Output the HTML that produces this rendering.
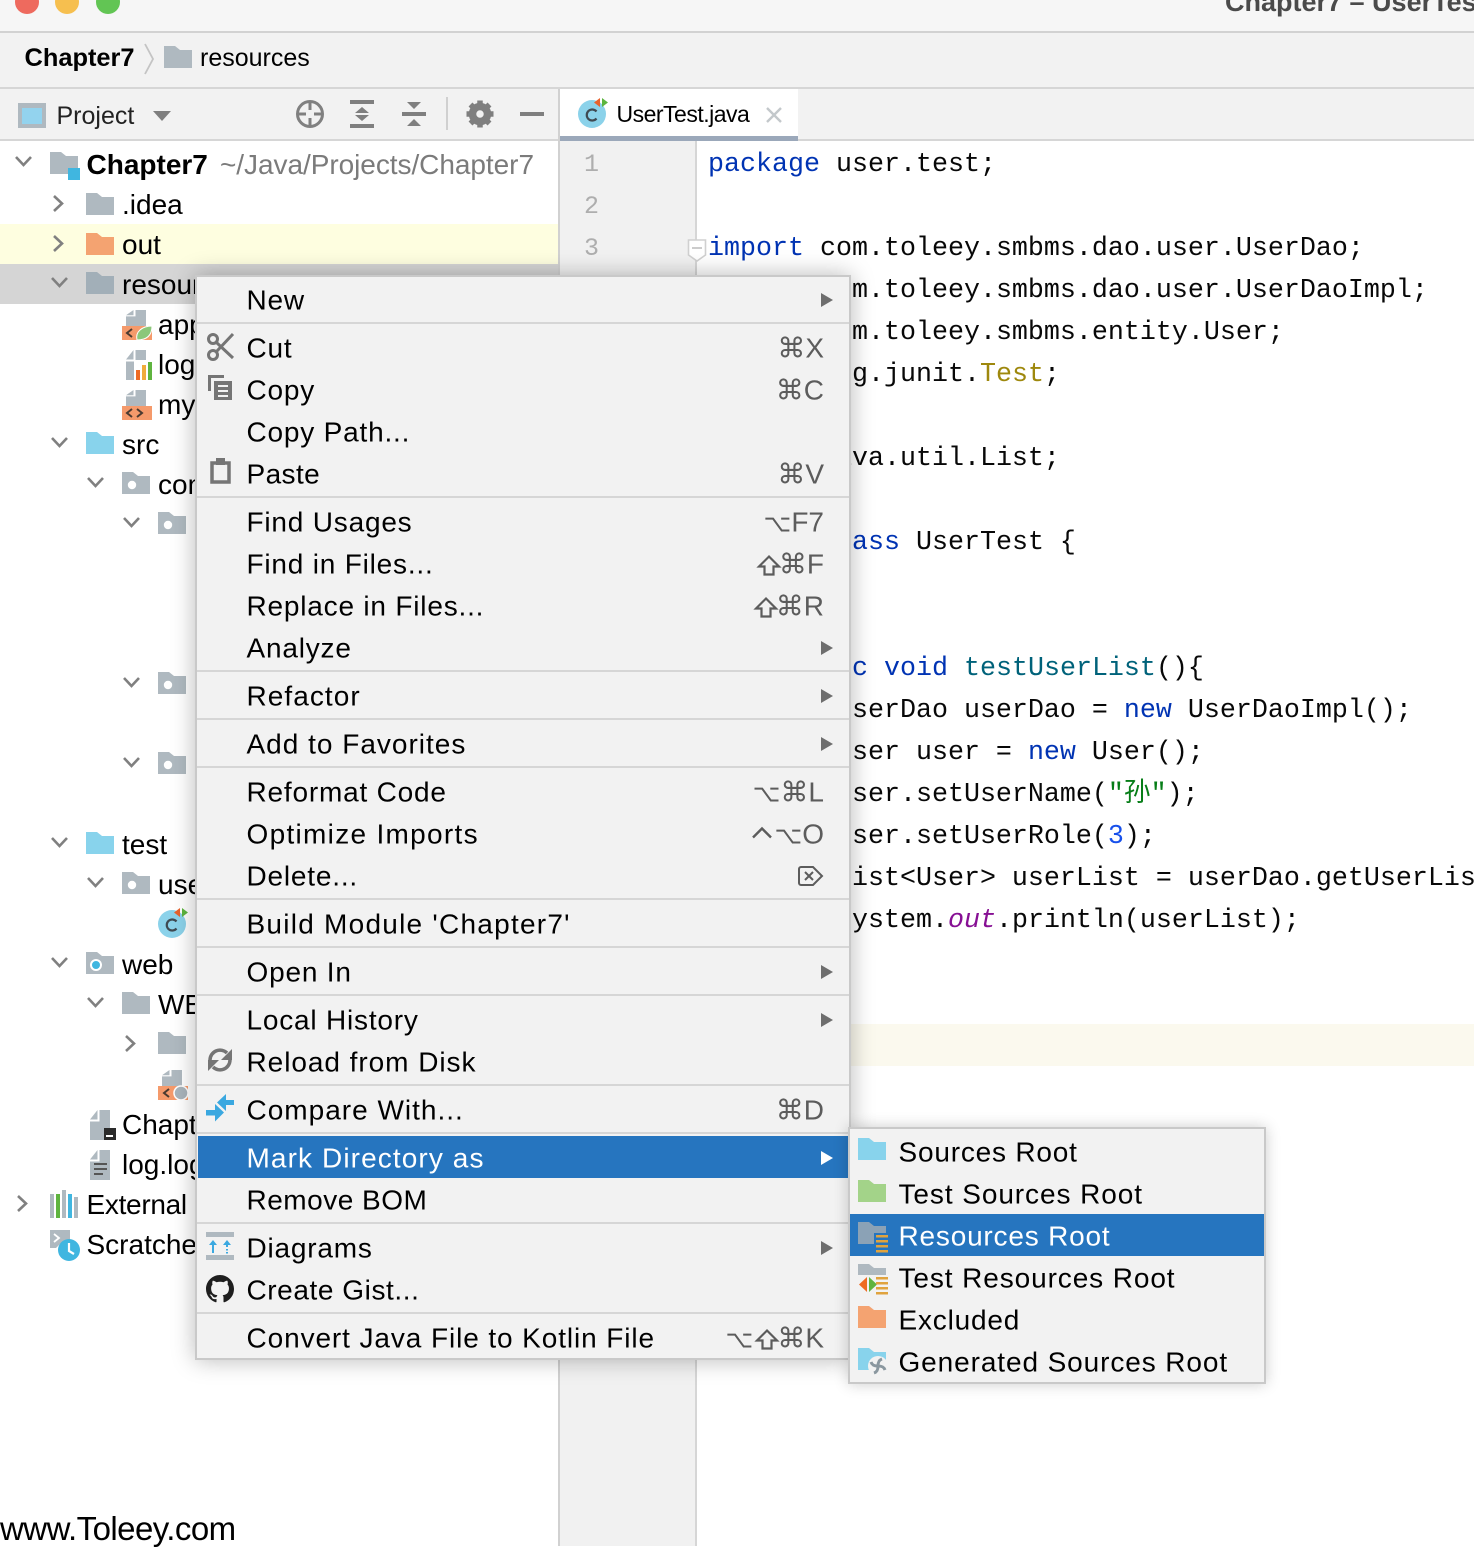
<!DOCTYPE html>
<html><head><meta charset="utf-8"><style>
html,body{margin:0;padding:0}
body{width:1474px;height:1546px;overflow:hidden;position:relative;background:#fff;font-family:"Liberation Sans","DejaVu Sans","Noto Sans CJK SC",sans-serif;color:#000}
.a{position:absolute}
.t{position:absolute;white-space:nowrap;line-height:40px;font-size:28px}
.c{position:absolute;left:708px;white-space:pre;font-family:"Liberation Mono","Noto Sans CJK SC",monospace;font-size:26.67px;line-height:42px;color:#080808}
.k{color:#0033b3}.f{color:#00627a}.s{color:#067d17}.n{color:#1750eb}.an{color:#9e880d}.o{color:#871094;font-style:italic}
.ln{position:absolute;left:584px;font-family:"Liberation Mono",monospace;font-size:25px;line-height:42px;color:#aeaeae}
.sep{position:absolute;left:0;width:652px;height:2px;background:#d6d6d6}
.m{position:absolute;white-space:nowrap;line-height:40px;font-size:28px;letter-spacing:.8px;left:49.5px;transform:translateY(.5px)}
.sc{position:absolute;white-space:nowrap;line-height:40px;font-size:28px;right:25px;color:#5c5c5c;transform:translateY(.5px)}
.sc i{font-style:normal;font-size:24px}
svg{position:absolute;left:0;top:0;overflow:visible}
svg.si{position:static;vertical-align:-3px;margin-right:-2px}
</style></head><body>
<div class="a" style="left:0;top:0;width:1474px;height:31px;background:#f6f6f6"></div>
<div class="a" style="left:0;top:31px;width:1474px;height:2px;background:#d2d2d2"></div>
<div class="a" style="left:0;top:33px;width:1474px;height:54px;background:#f2f2f2"></div>
<div class="a" style="left:0;top:87px;width:1474px;height:2px;background:#d6d6d6"></div>
<div class="a" style="left:0;top:89px;width:558px;height:50px;background:#f2f2f2"></div>
<div class="a" style="left:560px;top:89px;width:914px;height:50px;background:#f2f2f2"></div>
<div class="a" style="left:0;top:139px;width:1474px;height:2px;background:#d6d6d6"></div>
<div class="a" style="left:558px;top:89px;width:2px;height:1457px;background:#d1d1d1"></div>
<div class="a" style="left:560px;top:89px;width:238px;height:48px;background:#fff"></div>
<div class="a" style="left:560px;top:136px;width:238px;height:5px;background:#9ba8ba"></div>
<div class="a" style="left:560px;top:141px;width:135px;height:1405px;background:#f1f1f1"></div>
<div class="a" style="left:695px;top:141px;width:2px;height:1405px;background:#d6d6d6"></div>
<div class="a" style="left:697px;top:1024px;width:777px;height:42px;background:#fbf9ee"></div>
<div class="a" style="left:0;top:224px;width:558px;height:40px;background:#fefee0"></div>
<div class="a" style="left:0;top:264px;width:558px;height:40px;background:#d5d5d5"></div>

<div class="t" style="left:1225px;top:-18px;font-size:27px;font-weight:bold;color:#4a4a4a">Chapter7 – UserTest</div>
<div class="t" style="left:24.500px;top:38px;font-size:25.400px;font-weight:bold">Chapter7</div>
<div class="t" style="left:200px;top:38px;font-size:25px">resources</div>
<div class="t" style="left:56.500px;top:96px;font-size:25px;color:#222">Project</div>
<div class="t" style="left:616.500px;top:94px;font-size:23px;letter-spacing:-.5px">UserTest.java</div>

<div class="t" style="left:86.500px;top:145px;font-weight:bold">Chapter7</div>
<div class="t" style="left:220px;top:145px;color:#7b7b7b;letter-spacing:-.05px">~/Java/Projects/Chapter7</div>
<div class="t" style="left:122px;top:185px">.idea</div>
<div class="t" style="left:122px;top:225px">out</div>
<div class="t" style="left:122px;top:265px">resources</div>
<div class="t" style="left:158px;top:305px">application.xml</div>
<div class="t" style="left:158px;top:345px">log4j.properties</div>
<div class="t" style="left:158px;top:385px">mybatis.xml</div>
<div class="t" style="left:122px;top:425px">src</div>
<div class="t" style="left:158px;top:465px">com.toleey</div>
<div class="t" style="left:122px;top:825px">test</div>
<div class="t" style="left:158px;top:865px">user.test</div>
<div class="t" style="left:122px;top:945px">web</div>
<div class="t" style="left:158px;top:985px">WEB-INF</div>
<div class="t" style="left:122px;top:1105px">Chapter7.iml</div>
<div class="t" style="left:122px;top:1145px">log.log</div>
<div class="t" style="left:86.500px;top:1185px;letter-spacing:-.3px">External Libraries</div>
<div class="t" style="left:86.500px;top:1225px">Scratches and Consoles</div>
<div class="t" style="left:0;top:1509px;font-size:33px;letter-spacing:-.55px">www.Toleey.com</div>

<div class="ln" style="top:144px">1</div>
<div class="ln" style="top:186px">2</div>
<div class="ln" style="top:228px">3</div>

<div class="c" style="top:144px"><span class="k">package</span> user.test;</div>
<div class="c" style="top:228px"><span class="k">import</span> com.toleey.smbms.dao.user.UserDao;</div>
<div class="c" style="top:270px"><span class="k">import</span> com.toleey.smbms.dao.user.UserDaoImpl;</div>
<div class="c" style="top:312px"><span class="k">import</span> com.toleey.smbms.entity.User;</div>
<div class="c" style="top:354px"><span class="k">import</span> org.junit.<span class="an">Test</span>;</div>
<div class="c" style="top:438px"><span class="k">import</span> java.util.List;</div>
<div class="c" style="top:522px"><span class="k">public class</span> UserTest {</div>
<div class="c" style="top:648px">    <span class="k">public void</span> <span class="f">testUserList</span>(){</div>
<div class="c" style="top:690px">        UserDao userDao = <span class="k">new</span> UserDaoImpl();</div>
<div class="c" style="top:732px">        User user = <span class="k">new</span> User();</div>
<div class="c" style="top:774px">        user.setUserName(<span class="s">"孙"</span>);</div>
<div class="c" style="top:816px">        user.setUserRole(<span class="n">3</span>);</div>
<div class="c" style="top:858px">        List&lt;User&gt; userList = userDao.getUserList();</div>
<div class="c" style="top:900px">        System.<span class="o">out</span>.println(userList);</div>

<svg width="1474" height="1546" viewBox="0 0 1474 1546">
<defs>
<path id="fd" d="M0 0h11l5 4h12v18H0z"/>
<path id="pg" d="M9.500 0H20V30H0V11.500H9.500ZM0 9.500L7.500 0V9.500Z"/>
<path id="dn" d="M0 0l7.500 8L15 0" fill="none" stroke="#808080" stroke-width="2.600"/>
<path id="rt" d="M0 0l8 7.500L0 15" fill="none" stroke="#808080" stroke-width="2.600"/>
<g id="pk"><use href="#fd" fill="#afb9c0"/><circle cx="10" cy="13" r="4.200" fill="#fff"/></g>
<g id="cl"><circle cx="14" cy="16" r="14" fill="#8bd2ea"/><path d="M18.500 13.500a5.500 5.500 0 1 0 0 7" fill="none" stroke="#3f4a52" stroke-width="2.200"/><path d="M22 0v9l-6-4.500z" fill="#e8622c"/><path d="M24 0v9l6-4.500z" fill="#5cb53f"/></g>
</defs>
<circle cx="27" cy="2" r="12" fill="#ee6a5e"/><circle cx="67" cy="2" r="12" fill="#f6bf4f"/><circle cx="108" cy="2" r="12" fill="#62c554"/>
<path d="M145 44l8 15-8 15" fill="none" stroke="#c4c4c4" stroke-width="1.800"/>
<use href="#fd" x="164" y="46" fill="#afb9c0"/>
<rect x="18" y="103" width="28" height="25" fill="#afb9c0"/><rect x="22" y="108" width="20" height="16" fill="#93d3ee"/>
<path d="M153 111h18l-9 10z" fill="#7f7f7f"/>
<g fill="none" stroke="#808080" stroke-width="3"><circle cx="310" cy="114" r="12.500"/><path d="M310 101v9M310 118v9M297 114h9M314 114h9"/></g>
<path d="M350 100h24v4h-24zM350 124h24v4h-24zM362 107l7 6h-14zM362 121l7-6h-14z" fill="#7f7f7f"/>
<path d="M402 112h24v4h-24zM407 102h14l-7 7zM414 119l7 7h-14z" fill="#7f7f7f"/>
<rect x="446" y="97" width="2" height="33" fill="#d0d0d0"/>
<g transform="translate(480 114)"><circle r="7.500" fill="none" stroke="#7f7f7f" stroke-width="7.500"/><g stroke="#7f7f7f" stroke-width="5.500"><path d="M0-13.500V-9M0 13.500V9M-13.500 0H-9M13.500 0H9M-9.500-9.500L-6-6M9.500 9.500L6 6M-9.500 9.500L-6 6M9.500-9.500L6-6"/></g></g>
<rect x="520" y="112" width="24" height="4" fill="#7f7f7f"/>
<use href="#cl" x="578" y="98"/>
<path d="M767 108l14 14M781 108l-14 14" stroke="#c3c8cb" stroke-width="2.400" fill="none"/>
<path d="M688.500 240h17v15l-8.500 6-8.500-6z" fill="#fff" stroke="#d0d0d0" stroke-width="1.600"/><path d="M692 248h10" stroke="#c0c0c0" stroke-width="1.600"/>

<use href="#dn" x="16" y="157"/><use href="#rt" x="54" y="196"/><use href="#rt" x="54" y="236"/><use href="#dn" x="52" y="278"/>
<use href="#dn" x="52" y="438"/><use href="#dn" x="88" y="478"/><use href="#dn" x="124" y="518"/><use href="#dn" x="124" y="678"/><use href="#dn" x="124" y="758"/>
<use href="#dn" x="52" y="838"/><use href="#dn" x="88" y="878"/><use href="#dn" x="52" y="958"/><use href="#dn" x="88" y="998"/><use href="#rt" x="126" y="1036"/><use href="#rt" x="18" y="1196"/>

<use href="#fd" x="50" y="152" fill="#afb9c0"/><rect x="68" y="168" width="12" height="12" fill="#40b6e0"/>
<use href="#fd" x="86" y="193" fill="#afb9c0"/>
<use href="#fd" x="86" y="233" fill="#f4a371"/>
<use href="#fd" x="86" y="272" fill="#a2afb8"/>
<g transform="translate(126 310) scale(1 .55)"><use href="#pg" fill="#afb9c0"/></g>
<rect x="122" y="326" width="30" height="14" fill="#f59a6b"/><path d="M132 329l-5 4 5 4" fill="none" stroke="#4a3a30" stroke-width="2"/><path d="M137 340c-2-8 5-14 15-14 0 9-5 14-15 14z" fill="#8cc77a" stroke="#fff" stroke-width="1"/>
<g transform="translate(126 350)"><use href="#pg" fill="#afb9c0"/></g>
<rect x="134" y="360" width="20" height="20" fill="#fff"/><rect x="136" y="370" width="4" height="10" fill="#ee6b24"/><rect x="142" y="365" width="4" height="15" fill="#f0ac3c"/><rect x="148" y="362" width="4" height="18" fill="#5fb43f"/>
<g transform="translate(126 390) scale(1 .55)"><use href="#pg" fill="#afb9c0"/></g>
<rect x="122" y="406" width="30" height="14" fill="#f59a6b"/><path d="M132 409l-5 4 5 4M137 409l5 4-5 4" fill="none" stroke="#4a3a30" stroke-width="2"/>
<use href="#fd" x="86" y="432" fill="#88d3ec"/>
<use href="#pk" x="122" y="472"/><use href="#pk" x="158" y="512"/><use href="#pk" x="158" y="672"/><use href="#pk" x="158" y="752"/>
<use href="#fd" x="86" y="832" fill="#88d3ec"/>
<use href="#pk" x="122" y="872"/>
<use href="#cl" x="158" y="908"/>
<use href="#fd" x="86" y="952" fill="#afb9c0"/><circle cx="96" cy="965" r="5" fill="#40b6e0" stroke="#fff" stroke-width="2"/>
<use href="#fd" x="122" y="992" fill="#afb9c0"/><use href="#fd" x="158" y="1032" fill="#afb9c0"/>
<g transform="translate(162 1070) scale(1 .55)"><use href="#pg" fill="#afb9c0"/></g>
<rect x="158" y="1086" width="30" height="14" fill="#f59a6b"/><path d="M169 1089l-5 4 5 4" fill="none" stroke="#4a3a30" stroke-width="2"/><circle cx="181" cy="1093" r="7" fill="#a9b4bb" stroke="#fff" stroke-width="1.500"/>
<g transform="translate(90 1110)"><use href="#pg" fill="#afb9c0"/></g><rect x="104" y="1128" width="12" height="12" fill="#2b2b2b"/><rect x="106" y="1135" width="7" height="2" fill="#fff"/>
<g transform="translate(90 1150)"><use href="#pg" fill="#afb9c0"/></g><path d="M94 1163h13v2h-13zM94 1168h13v2h-13zM94 1173h9v2h-9z" fill="#555"/>
<rect x="50" y="1194" width="4" height="24" fill="#afb9c0"/><rect x="56" y="1194" width="4" height="24" fill="#5fb43f"/><rect x="62" y="1190" width="4" height="28" fill="#afb9c0"/><rect x="68" y="1194" width="4" height="24" fill="#40b6e0"/><rect x="74" y="1197" width="4" height="21" fill="#afb9c0"/>
<path d="M50 1230h20v10l-10 4-4 4h-6z" fill="#afb9c0"/><path d="M54 1234l5 4-5 4" fill="none" stroke="#fff" stroke-width="1.800"/><circle cx="69" cy="1250" r="11" fill="#40b6e0"/><path d="M69 1243v8l5 3" fill="none" stroke="#fff" stroke-width="2.200"/>
</svg>

<div class="a" style="left:195px;top:275px;width:652px;height:1081px;background:#f2f2f2;border:2px solid #c9c9c9;box-shadow:0 0 22px rgba(0,0,0,.28)"></div>
<div class="a" style="left:197px;top:277px;width:652px;height:1081px" id="menu">
<div class="sep" style="top:45px"></div><div class="sep" style="top:219px"></div><div class="sep" style="top:393px"></div><div class="sep" style="top:441px"></div><div class="sep" style="top:489px"></div><div class="sep" style="top:621px"></div><div class="sep" style="top:669px"></div><div class="sep" style="top:717px"></div><div class="sep" style="top:807px"></div><div class="sep" style="top:855px"></div><div class="sep" style="top:945px"></div><div class="sep" style="top:1035px"></div>
<div class="a" style="left:1px;top:859px;width:651px;height:42px;background:#2675bf"></div>
<div class="m" style="top:3px">New</div>
<div class="m" style="top:51px">Cut</div><div class="sc" style="top:51px">⌘X</div>
<div class="m" style="top:93px">Copy</div><div class="sc" style="top:93px">⌘C</div>
<div class="m" style="top:135px">Copy Path...</div>
<div class="m" style="top:177px;letter-spacing:.4px">Paste</div><div class="sc" style="top:177px">⌘V</div>
<div class="m" style="top:225px">Find Usages</div><div class="sc" style="top:225px"><i>⌥</i>F7</div>
<div class="m" style="top:267px">Find in Files...</div><div class="sc" style="top:267px"><svg class="si" width="24" height="22" viewBox="0 0 24 22"><path d="M12 2L22 12H16.500V20H7.500V12H2Z" fill="none" stroke="#5c5c5c" stroke-width="2.200"/></svg>⌘F</div>
<div class="m" style="top:309px">Replace in Files...</div><div class="sc" style="top:309px"><svg class="si" width="24" height="22" viewBox="0 0 24 22"><path d="M12 2L22 12H16.500V20H7.500V12H2Z" fill="none" stroke="#5c5c5c" stroke-width="2.200"/></svg>⌘R</div>
<div class="m" style="top:351px">Analyze</div>
<div class="m" style="top:399px;letter-spacing:1.05px">Refactor</div>
<div class="m" style="top:447px;letter-spacing:1px">Add to Favorites</div>
<div class="m" style="top:495px">Reformat Code</div><div class="sc" style="top:495px"><i>⌥</i>⌘L</div>
<div class="m" style="top:537px;letter-spacing:1.3px">Optimize Imports</div><div class="sc" style="top:537px"><svg class="si" style="margin-right:2px" width="22" height="22" viewBox="0 0 22 22"><path d="M2 13L11 4L20 13" fill="none" stroke="#5c5c5c" stroke-width="2.400"/></svg><i>⌥</i>O</div>
<div class="m" style="top:579px">Delete...</div>
<div class="m" style="top:627px;letter-spacing:1.25px">Build Module 'Chapter7'</div>
<div class="m" style="top:675px">Open In</div>
<div class="m" style="top:723px">Local History</div>
<div class="m" style="top:765px;letter-spacing:.95px">Reload from Disk</div>
<div class="m" style="top:813px;letter-spacing:1px">Compare With...</div><div class="sc" style="top:813px">⌘D</div>
<div class="m" style="top:861px;color:#fff;letter-spacing:1.1px">Mark Directory as</div>
<div class="m" style="top:903px;letter-spacing:.5px">Remove BOM</div>
<div class="m" style="top:951px">Diagrams</div>
<div class="m" style="top:993px;letter-spacing:.57px">Create Gist...</div>
<div class="m" style="top:1041px;letter-spacing:.9px">Convert Java File to Kotlin File</div><div class="sc" style="top:1041px"><i>⌥</i><svg class="si" style="margin-left:2px" width="24" height="22" viewBox="0 0 24 22"><path d="M12 2L22 12H16.500V20H7.500V12H2Z" fill="none" stroke="#5c5c5c" stroke-width="2.200"/></svg>⌘K</div>
</div>

<div class="a" style="left:848px;top:1127px;width:414px;height:253px;background:#f2f2f2;border:2px solid #c9c9c9;box-shadow:0 0 14px rgba(0,0,0,.2)"></div>
<div class="a" style="left:850px;top:1214px;width:414px;height:42px;background:#2675bf"></div>
<div class="m" style="left:898.500px;top:1132px">Sources Root</div>
<div class="m" style="left:898.500px;top:1174px;letter-spacing:.92px">Test Sources Root</div>
<div class="m" style="left:898.500px;top:1216px;color:#fff">Resources Root</div>
<div class="m" style="left:898.500px;top:1258px;letter-spacing:.9px">Test Resources Root</div>
<div class="m" style="left:898.500px;top:1300px">Excluded</div>
<div class="m" style="left:898.500px;top:1342px;letter-spacing:.9px">Generated Sources Root</div>

<svg width="1474" height="1546" viewBox="0 0 1474 1546">
<defs>
<path id="ar" d="M0 0l12 7-12 7z"/>
<path id="fd2" d="M0 0h11l5 4h12v18H0z"/>
<path id="ln2" d="M0 0h12v2.500H0zM0 5h12v2.500H0zM0 10h12v2.500H0zM0 15h12v2.500H0z"/>
</defs>
<g fill="#6e6e6e"><use href="#ar" x="821" y="293"/><use href="#ar" x="821" y="641"/><use href="#ar" x="821" y="689"/><use href="#ar" x="821" y="737"/><use href="#ar" x="821" y="965"/><use href="#ar" x="821" y="1013"/><use href="#ar" x="821" y="1241"/></g>
<use href="#ar" x="821" y="1151" fill="#fff"/>
<g fill="none" stroke="#757575" stroke-width="3"><circle cx="213" cy="339" r="4.500"/><circle cx="213" cy="355" r="4.500"/><path d="M217 343l16 15M217 351l16-17"/></g>
<path d="M208 375h16v3h-13v13h-3z" fill="#757575"/><path d="M214 381h18v19h-18z" fill="#757575"/><path d="M218 385h10v2h-10zM218 390h10v2h-10zM218 395h10v2h-10z" fill="#f2f2f2"/>
<path d="M212 463h17v19h-17z" fill="none" stroke="#757575" stroke-width="3.500"/><path d="M216 458h9v7h-9z" fill="#757575"/>
<path d="M801 867h12l9 9-9 9h-12a2 2 0 0 1-2-2v-14a2 2 0 0 1 2-2z" fill="none" stroke="#5c5c5c" stroke-width="2"/><path d="M805 872l8 8M813 872l-8 8" stroke="#5c5c5c" stroke-width="2"/>
<g fill="none" stroke="#757575" stroke-width="3.500"><path d="M210 1060a10 10 0 0 1 17-7"/><path d="M230 1060a10 10 0 0 1-17 7"/></g><path d="M232 1049v11h-11zM208 1071v-11h11z" fill="#757575"/>
<path d="M234 1100h-8v-6l-9 8.500 9 8.500v-6h8zM206 1110h9v-6l9 8.500-9 9v-6h-9z" fill="#3aa8e0"/>
<rect x="206" y="1232" width="28" height="5" fill="#afb9c0"/><rect x="206" y="1255" width="28" height="5" fill="#afb9c0"/><path d="M213 1240l4 5h-3v8h-2v-8h-3zM227 1240l4 5h-3v2h-2v-2h-3zM226 1249h2v1.500h-2zM226 1252h2v1.500h-2z" fill="#3aa8e0"/>
<g transform="translate(206 1275) scale(1.750)"><path d="M8 0C3.580 0 0 3.580 0 8c0 3.540 2.290 6.530 5.470 7.590.4.070.55-.17.55-.38 0-.19-.01-.82-.01-1.490-2.010.37-2.530-.49-2.690-.94-.09-.23-.48-.94-.82-1.130-.28-.15-.68-.52-.01-.53.63-.01 1.080.58 1.230.82.72 1.210 1.870.87 2.330.66.07-.52.28-.87.51-1.070-1.780-.2-3.640-.89-3.640-3.950 0-.87.31-1.590.82-2.150-.08-.2-.36-1.020.08-2.120 0 0 .67-.21 2.200.82.64-.18 1.320-.27 2-.27.68 0 1.360.09 2 .27 1.530-1.040 2.200-.82 2.200-.82.44 1.100.16 1.920.08 2.120.51.56.82 1.270.82 2.150 0 3.070-1.870 3.750-3.650 3.950.29.25.54.73.54 1.480 0 1.070-.01 1.930-.01 2.200 0 .21.15.46.55.38A8.013 8.013 0 0016 8c0-4.420-3.580-8-8-8z" fill="#1e1e1e"/></g>
<use href="#fd2" x="858" y="1138" fill="#88d3ec"/>
<use href="#fd2" x="858" y="1180" fill="#a3d389"/>
<use href="#fd2" x="858" y="1222" fill="#8ba2b6"/><rect x="874" y="1233" width="15" height="18" fill="#2675bf"/><use href="#ln2" x="876" y="1235" fill="#e0a33e"/>
<use href="#fd2" x="858" y="1264" fill="#afb9c0"/><rect x="856" y="1275" width="34" height="18" fill="#f2f2f2"/><path d="M867 1277v15l-8-7.500z" fill="#ee6b24"/><path d="M869 1277v15l8-7.500z" fill="#5fb43f"/><use href="#ln2" x="876" y="1277" fill="#e0a33e"/>
<use href="#fd2" x="858" y="1306" fill="#f4a371"/>
<use href="#fd2" x="858" y="1348" fill="#88d3ec"/><circle cx="878" cy="1366" r="10" fill="#f2f2f2"/><g stroke="#8a979f" stroke-width="3" fill="none"><path d="M878 1366c0-4 1-6 4-7M878 1366c4 0 6 1 7 4M878 1366c0 4-1 6-4 7M878 1366c-4 0-6-1-7-4"/></g>
</svg>
</body></html>
